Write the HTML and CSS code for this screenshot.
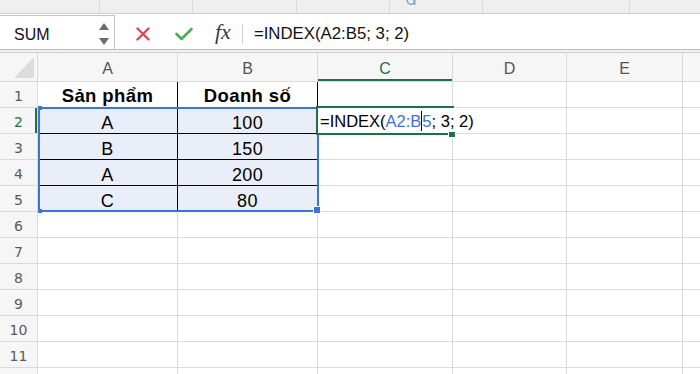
FILE: index.html
```html
<!DOCTYPE html>
<html lang="vi">
<head>
    <meta charset="UTF-8">
    <meta name="viewport" content="width=device-width, initial-scale=1.0">
    <title>INDEX - Excel</title>
    <link rel="stylesheet" href="styles.css">
</head>
<body>

<!-- dai ribbon phia tren (bi cat) -->
<div class="strip">
    <div></div>
    <div></div>
    <div></div>
    <div></div>
    <div class="strip-icon">
        <svg width="26" height="6" viewBox="0 0 26 6"><path d="M17 0 Q18 5 22 4 L24 4 L24 0" fill="none" stroke="#7da7d9" stroke-width="1.5"/><path d="M25 0 V5" stroke="#9a9a9a" stroke-width="1"/></svg>
    </div>
    <div></div>
    <div></div>
</div>

<div class="formula-bar">
    <div class="name-box">
        <span>SUM</span>
        <span class="spinner">
            <svg width="10" height="7" viewBox="0 0 10 7"><path d="M5 0 L10 7 L0 7 Z" fill="#6b6b6b"/></svg>
            <svg width="10" height="7" viewBox="0 0 10 7"><path d="M0 0 L10 0 L5 7 Z" fill="#6b6b6b"/></svg>
        </span>
    </div>
    <div class="tools">
        <svg class="icon-cancel" width="14" height="14" viewBox="0 0 14 14"><path d="M1.5 1.5 L12.5 12.5 M12.5 1.5 L1.5 12.5" stroke="#e0484e" stroke-width="2.4" stroke-linecap="round"/></svg>
        <svg class="icon-ok" width="18" height="14" viewBox="0 0 18 14"><path d="M1.5 7 L6.5 12 L16.5 2" fill="none" stroke="#4caf50" stroke-width="2.6" stroke-linecap="round" stroke-linejoin="round"/></svg>
        <span class="fx">fx</span>
        <span class="sep"></span>
    </div>
    <div class="formula-input">=INDEX(A2:B5; 3; 2)</div>
</div>
<div class="bar-divider"></div>

<div class="sheet">
    <div class="row head">
        <div class="corner"><span class="tri"></span></div>
        <div>A</div>
        <div>B</div>
        <div class="col-active">C</div>
        <div>D</div>
        <div>E</div>
        <div></div>
    </div>
    <div class="row">
        <div class="rh">1</div>
        <div class="bold dr">Sản phẩm</div>
        <div class="bold dr">Doanh số</div>
        <div></div><div></div><div></div><div></div>
    </div>
    <div class="row">
        <div class="rh row-active">2</div>
        <div class="sel dr db">A</div>
        <div class="sel db">100</div>
        <div></div><div></div><div></div><div></div>
    </div>
    <div class="row">
        <div class="rh">3</div>
        <div class="sel dr db">B</div>
        <div class="sel db">150</div>
        <div></div><div></div><div></div><div></div>
    </div>
    <div class="row">
        <div class="rh">4</div>
        <div class="sel dr db">A</div>
        <div class="sel db">200</div>
        <div></div><div></div><div></div><div></div>
    </div>
    <div class="row">
        <div class="rh">5</div>
        <div class="sel dr">C</div>
        <div class="sel">80</div>
        <div></div><div></div><div></div><div></div>
    </div>
    <div class="row"><div class="rh">6</div><div></div><div></div><div></div><div></div><div></div><div></div></div>
    <div class="row"><div class="rh">7</div><div></div><div></div><div></div><div></div><div></div><div></div></div>
    <div class="row"><div class="rh">8</div><div></div><div></div><div></div><div></div><div></div><div></div></div>
    <div class="row"><div class="rh">9</div><div></div><div></div><div></div><div></div><div></div><div></div></div>
    <div class="row"><div class="rh">10</div><div></div><div></div><div></div><div></div><div></div><div></div></div>
    <div class="row"><div class="rh">11</div><div></div><div></div><div></div><div></div><div></div><div></div></div>
    <div class="row last"><div class="rh"></div><div></div><div></div><div></div><div></div><div></div><div></div></div>

    <!-- vung chon A2:B5 -->
    <div class="selection">
        <span class="handle tl"></span>
        <span class="handle tr"></span>
        <span class="handle bl"></span>
        <span class="handle br"></span>
    </div>

    <!-- o dang sua C2 -->
    <div class="editor">
        <span class="editor-text">=INDEX(<span class="ref">A2:B</span><span class="caret"></span><span class="ref">5</span>; 3; 2)</span>
        <span class="fill-handle"></span>
    </div>
</div>

</body>
</html>
```

FILE: styles.css
```css
body {
    margin: 0;
    height: 374px;
    background-color: #ffffff;
    font-family: "Liberation Sans", Arial, sans-serif;
    color: #000;
    overflow: hidden;
}

/* dai ribbon */
.strip {
    height: 13px;
    background-color: #efefef;
    border-bottom: 1px solid #cfcfcf;
    display: grid;
    grid-template-columns: 100px 93px 104px 93px 93px 147px 1fr;
}
.strip > div {
    border-right: 1px solid #dadada;
    box-sizing: border-box;
}
.strip > div:last-child {
    border-right: none;
}
.strip-icon {
    display: flex;
    align-items: flex-start;
}

/* thanh cong thuc */
.formula-bar {
    height: 36px;
    display: flex;
    align-items: stretch;
    background-color: #ffffff;
    border-bottom: 1px solid #bdbdbd;
    box-sizing: border-box;
}
.name-box {
    width: 115px;
    margin-top: 1px;
    border-top: 1px solid #c4c4c4;
    border-right: 1px solid #c4c4c4;
    box-sizing: border-box;
    display: flex;
    align-items: center;
    justify-content: space-between;
    padding: 4px 5px 0 14px;
    font-size: 16px;
    color: #111;
}
.spinner {
    display: flex;
    flex-direction: column;
    gap: 8px;
    margin-top: -2px;
}
.tools {
    display: flex;
    align-items: center;
    padding-top: 4px;
}
.icon-cancel {
    margin-left: 21px;
}
.icon-ok {
    margin-left: 25px;
}
.fx {
    margin-left: 22px;
    font-family: "Liberation Serif", "Times New Roman", serif;
    font-style: italic;
    font-size: 22px;
    color: #3a3a3a;
    line-height: 1;
    margin-top: -3px;
}
.sep {
    width: 1px;
    height: 20px;
    background-color: #cfcfcf;
    margin-left: 11px;
}
.formula-input {
    display: flex;
    align-items: center;
    padding: 4px 0 0 11px;
    font-size: 16.8px;
    color: #111;
}
.bar-divider {
    height: 2px;
    background-color: #f1f1f1;
    border-bottom: 1px solid #cfcfcf;
}

/* luoi bang tinh */
.sheet {
    position: relative;
}
.row {
    display: grid;
    grid-template-columns: 38px 140px 140px 135px 114px 116px 1fr;
    grid-template-rows: 100%;
    height: 26px;
}
.row > div {
    border-right: 1px solid #dadada;
    border-bottom: 1px solid #dadada;
    box-sizing: border-box;
    display: flex;
    align-items: center;
    justify-content: center;
    padding-top: 4px;
    font-size: 18px;
    line-height: 20px;
    letter-spacing: 0.4px;
    overflow: hidden;
}
.row > div:last-child {
    border-right: none;
}
.row.last {
    height: 10px;
}
.head {
    height: 29px;
}
.head > div {
    background-color: #f6f6f6;
    color: #555;
    font-size: 16px;
    letter-spacing: 0;
    padding-top: 4px;
}
.corner {
    justify-content: flex-end !important;
    align-items: flex-end !important;
    padding: 0 3px 3px 0 !important;
}
.tri {
    width: 20px;
    height: 21px;
    background-color: #dcdcdc;
    clip-path: polygon(100% 0, 100% 100%, 0 100%);
}
.col-active {
    color: #1e7145 !important;
    box-shadow: inset 0 -2px 0 #1e7145;
}
.rh {
    background-color: #f6f6f6;
    color: #5a5a5a;
    font-family: "DejaVu Sans", Verdana, sans-serif;
    font-size: 14px !important;
    letter-spacing: 0 !important;
    padding-top: 3px !important;
}
.row-active {
    color: #1e7145 !important;
    box-shadow: inset -2px 0 0 #1e7145;
}
.bold {
    font-weight: bold;
    font-size: 18.5px !important;
    padding-top: 3px !important;
}
.sel {
    background-color: #e9eef9;
}
.dr {
    border-right-color: #000 !important;
}
.db {
    border-bottom-color: #000 !important;
}

/* vung chon */
.selection {
    position: absolute;
    left: 38px;
    top: 54px;
    width: 281px;
    height: 105px;
    border: 2px solid #3b73d6;
    box-sizing: border-box;
}
.handle {
    position: absolute;
    width: 4px;
    height: 4px;
    background-color: #3b73d6;
}
.handle.tl { left: -2px; top: -3px; }
.handle.tr { right: -3px; top: -3px; }
.handle.bl { left: -2px; bottom: -3px; }
.handle.br { right: -4px; bottom: -4px; width: 6px; height: 6px; border: 1px solid #fff; }

.editor {
    position: absolute;
    left: 316px;
    top: 53px;
    width: 138px;
    height: 29px;
    border: 2px solid #1e7145;
    box-sizing: border-box;
}
.editor-text {
    display: inline-block;
    white-space: nowrap;
    background-color: #ffffff;
    line-height: 23px;
    padding: 2px 3px 0 2px;
    font-size: 16.5px;
    color: #000;
}
.ref {
    color: #3b73d6;
}
.caret {
    display: inline-block;
    width: 1px;
    height: 20px;
    background-color: #000;
    vertical-align: -4px;
}
.fill-handle {
    position: absolute;
    right: -4px;
    bottom: -5px;
    width: 6px;
    height: 5px;
    background-color: #1e7145;
    border: 1px solid #fff;
}
```
